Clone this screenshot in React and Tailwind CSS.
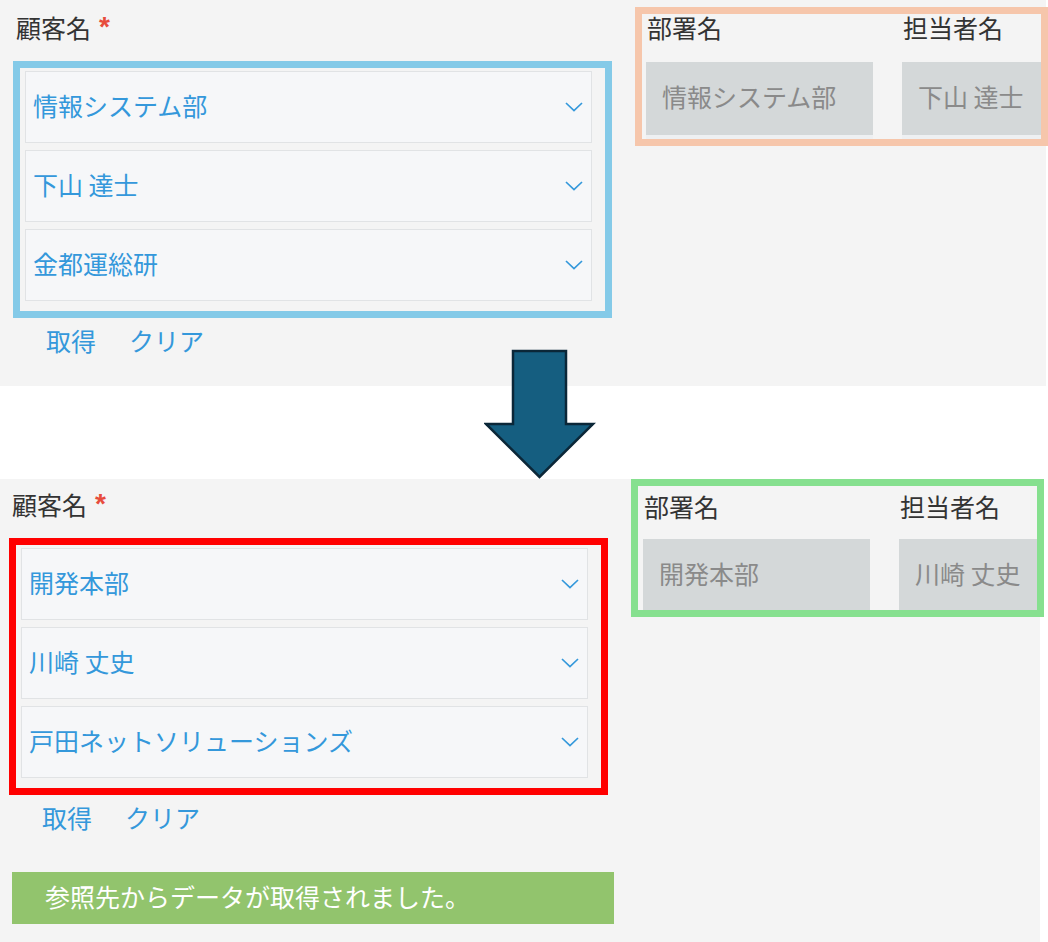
import React from "react";

const font = "font-[family-name:'Noto_Sans_CJK_JP','Noto_Sans',sans-serif]";

const Chevron = () => (
    <svg width="18" height="10" viewBox="0 0 18 10" fill="none">
        <path d="M1 1 L9 8.6 L17 1" stroke="#3498db" strokeWidth="1.7" />
    </svg>
);

const Select = ({ value }) => (
    <div className="h-[72px] flex items-center justify-between pl-[7px] pr-[8px] bg-[#f6f7f9] border border-[#e1e3e5]">
        <span className="pb-[4px] text-[25px] leading-none text-[#3498db] whitespace-pre">{value}</span>
        <Chevron />
    </div>
);

const Label = ({ children }) => (
    <div className="flex items-start text-[25px] leading-none text-[#333]">
        <span>{children}</span>
        <span className="ml-[8px] -mt-[2px] text-[28px] leading-none font-bold text-[#e74c3c] font-[family-name:'Liberation_Sans',sans-serif]">*</span>
    </div>
);

const Links = () => (
    <div className="flex gap-[33px] text-[25px] leading-none text-[#3498db]">
        <span>取得</span>
        <span>クリア</span>
    </div>
);

const Arrow = () => (
    <svg className="absolute left-[484px] top-[349px]" width="112" height="132" viewBox="0 0 112 132">
        <path
            d="M29 2 L82 2 L82 75 L109 75 L55.5 128 L2 75 L29 75 Z"
            fill="#155e80"
            stroke="#0b2738"
            strokeWidth="2.5"
            strokeLinejoin="miter"
        />
    </svg>
);

export default function App() {
    return (
        <div className={`relative w-[1048px] h-[942px] bg-white overflow-hidden ${font}`}>
            {/* before */}
            <div className="w-[1046px] h-[386px] bg-[#f4f4f4] flex items-start">
                <div className="w-[612px] shrink-0 pl-[13px] pt-[15px]">
                    <div className="ml-[3px]">
                        <Label>顧客名</Label>
                    </div>
                    <div className="mt-[20px] border-[7px] border-[#84cae8] pt-[3px] pl-[5px] pr-[13px] pb-[10px] flex flex-col gap-[7px]">
                        <Select value="情報システム部" />
                        <Select value="下山 達士" />
                        <Select value="金都運総研" />
                    </div>
                    <div className="mt-[10px] ml-[33px]">
                        <Links />
                    </div>
                </div>
                <div className="ml-[23px] mt-[7px] w-[413px] h-[139px] shrink-0 border-[7px] border-[#f6c6ab] overflow-hidden">
                    <div className="flex gap-[29px] pl-[4px] pt-[1px]">
                        <div className="w-[227px] shrink-0">
                            <p className="pl-[1px] text-[25px] leading-none text-[#333]">部署名</p>
                            <div className="mt-[22px] h-[77px] flex items-center pl-[16px] pb-[4px] bg-[#d4d8d9] border-b-[4px] border-[#eef0f2] text-[25px] leading-none text-[#8a8a8a] whitespace-pre">
                                情報システム部
                            </div>
                        </div>
                        <div className="w-[227px] shrink-0">
                            <p className="pl-[1px] text-[25px] leading-none text-[#333]">担当者名</p>
                            <div className="mt-[22px] h-[77px] flex items-center pl-[16px] pb-[4px] bg-[#d4d8d9] border-b-[4px] border-[#eef0f2] text-[25px] leading-none text-[#8a8a8a] whitespace-pre">
                                下山 達士
                            </div>
                        </div>
                    </div>
                </div>
            </div>

            {/* after */}
            <div className="mt-[93px] w-[1040px] h-[463px] bg-[#f4f4f4] flex items-start">
                <div className="w-[608px] shrink-0 pl-[9px] pt-[13px]">
                    <div className="ml-[3px]">
                        <Label>顧客名</Label>
                    </div>
                    <div className="mt-[20px] border-[7px] border-[#ff0000] pt-[3px] pl-[5px] pr-[13px] pb-[10px] flex flex-col gap-[7px]">
                        <Select value="開発本部" />
                        <Select value="川崎 丈史" />
                        <Select value="戸田ネットソリューションズ" />
                    </div>
                    <div className="mt-[10px] ml-[33px]">
                        <Links />
                    </div>
                    <div className="mt-[42px] ml-[3px] w-[602px] h-[52px] bg-[#92c46d] flex items-center pl-[33px] pb-[3px] text-[25px] leading-none text-white">
                        参照先からデータが取得されました。
                    </div>
                </div>
                <div className="ml-[23px] w-[413px] h-[138px] shrink-0 border-[7px] border-[#86e08f] overflow-hidden">
                    <div className="flex gap-[29px] pl-[5px] pt-[8px]">
                        <div className="w-[227px] shrink-0">
                            <p className="pl-[1px] text-[25px] leading-none text-[#333]">部署名</p>
                            <div className="mt-[20px] h-[77px] flex items-center pl-[16px] pb-[8px] bg-[#d4d8d9] text-[25px] leading-none text-[#8a8a8a] whitespace-pre">
                                開発本部
                            </div>
                        </div>
                        <div className="w-[227px] shrink-0">
                            <p className="pl-[1px] text-[25px] leading-none text-[#333]">担当者名</p>
                            <div className="mt-[20px] h-[77px] flex items-center pl-[16px] pb-[8px] bg-[#d4d8d9] text-[25px] leading-none text-[#8a8a8a] whitespace-pre">
                                川崎 丈史
                            </div>
                        </div>
                    </div>
                </div>
            </div>

            <Arrow />
        </div>
    );
}
